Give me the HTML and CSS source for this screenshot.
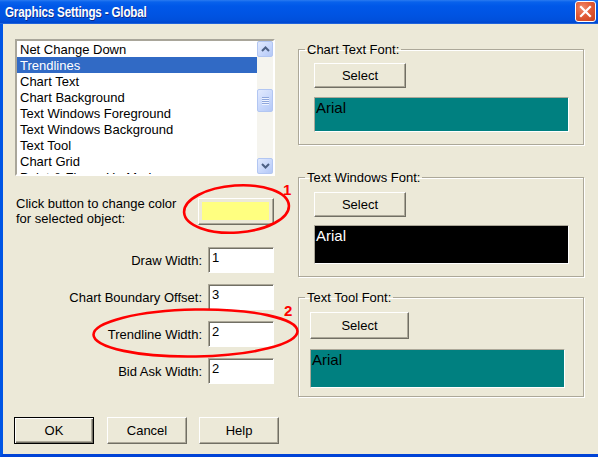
FILE: index.html
```html
<!DOCTYPE html>
<html>
<head>
<meta charset="utf-8">
<link rel="stylesheet" href="styles.css">
</head>
<body>
<div class="window">
  <div class="titlebar">
    <span class="title">Graphics Settings - Global</span>
    <button class="close" aria-label="Close">
      <svg width="13" height="13" viewBox="0 0 13 13"><path d="M2 2 L11 11 M11 2 L2 11" stroke="#fff" stroke-width="2.2" stroke-linecap="square"/></svg>
    </button>
  </div>
  <div class="body">
    <div class="main">
      <div class="left">
        <div class="listbox">
          <ul class="items">
            <li>Net Change Down</li>
            <li class="selected">Trendlines</li>
            <li>Chart Text</li>
            <li>Chart Background</li>
            <li>Text Windows Foreground</li>
            <li>Text Windows Background</li>
            <li>Text Tool</li>
            <li>Chart Grid</li>
            <li>Point &amp; Figure Up Mark</li>
          </ul>
          <div class="scrollbar">
            <div class="sb-btn"><svg width="9" height="6" viewBox="0 0 9 6"><path d="M1 5 L4.5 1.5 L8 5" fill="none" stroke="#4d6185" stroke-width="2"/></svg></div>
            <div class="sb-track">
              <div class="sb-thumb"><span></span><span></span><span></span><span></span></div>
            </div>
            <div class="sb-btn"><svg width="9" height="6" viewBox="0 0 9 6"><path d="M1 1 L4.5 4.5 L8 1" fill="none" stroke="#4d6185" stroke-width="2"/></svg></div>
          </div>
        </div>
        <div class="color-row">
          <div class="color-label">Click button to change color<br>for selected object:</div>
          <button class="btn color-btn"><span class="swatch"></span></button>
        </div>
        <div class="field-row first"><span class="label">Draw Width:</span><div class="input">1</div></div>
        <div class="field-row"><span class="label">Chart Boundary Offset:</span><div class="input">3</div></div>
        <div class="field-row"><span class="label">Trendline Width:</span><div class="input">2</div></div>
        <div class="field-row"><span class="label">Bid Ask Width:</span><div class="input">2</div></div>
      </div>
      <div class="right">
        <fieldset class="group g1">
          <legend>Chart Text Font:</legend>
          <button class="btn select">Select</button>
          <div class="preview teal">Arial</div>
        </fieldset>
        <fieldset class="group g2">
          <legend>Text Windows Font:</legend>
          <button class="btn select">Select</button>
          <div class="preview black">Arial</div>
        </fieldset>
        <fieldset class="group g3">
          <legend>Text Tool Font:</legend>
          <button class="btn select">Select</button>
          <div class="preview teal">Arial</div>
        </fieldset>
      </div>
    </div>
    <div class="actions">
      <button class="btn action default">OK</button>
      <button class="btn action">Cancel</button>
      <button class="btn action help">Help</button>
    </div>
  </div>
  <svg class="annotations" width="598" height="457" viewBox="0 0 598 457">
    <ellipse cx="236.5" cy="209" rx="52.5" ry="23.5" fill="none" stroke="#f00" stroke-width="2.6" transform="rotate(-4 236.5 209)"/>
    <text x="283" y="195" class="anno-num">1</text>
    <ellipse cx="195.5" cy="333" rx="102" ry="23.5" fill="none" stroke="#f00" stroke-width="2.6" transform="rotate(-1 195.5 333)"/>
    <text x="284" y="316" class="anno-num">2</text>
  </svg>
</div>
</body>
</html>
```
FILE: styles.css
```css
* { box-sizing: border-box; }

body {
  margin: 0;
  font-family: "Liberation Sans", Arial, sans-serif;
  font-size: 13px;
  color: #000;
}

.window {
  position: relative;
  width: 598px;
  height: 457px;
  display: flex;
  flex-direction: column;
  overflow: hidden;
  background: #ece9d8;
}

.titlebar {
  height: 24px;
  flex: none;
  display: flex;
  justify-content: space-between;
  align-items: flex-start;
  padding: 0 2px 0 5px;
  background: linear-gradient(#2a7bf0 0, #0862ec 2px, #0058e8 6px, #0054e3 14px, #0050dc 20px, #0047cf 23px, #3d7ee8 24px);
}

.title {
  font-family: "Liberation Sans", Arial, sans-serif;
  font-weight: bold;
  font-size: 14px;
  letter-spacing: -0.2px;
  line-height: 25px;
  color: #fff;
  text-shadow: 1px 1px 0 #0c2a8a;
  transform: scaleX(0.83);
  transform-origin: left center;
}

.close {
  width: 21px;
  height: 21px;
  margin-top: 1px;
  padding: 0;
  border: 1px solid #fff;
  border-radius: 3px;
  background: radial-gradient(circle at 35% 30%, #f08a6c 0, #e25c38 45%, #c8401e 100%);
  display: flex;
  align-items: center;
  justify-content: center;
}

.body {
  flex: 1;
  border-left: 3px solid #0055e5;
  border-bottom: 3px solid #0043d6;
  padding: 15px 0 0 12px;
  display: flex;
  flex-direction: column;
}

.main {
  display: flex;
  align-items: flex-start;
  gap: 23px;
}

.left {
  width: 260px;
  display: flex;
  flex-direction: column;
}

.listbox {
  height: 137px;
  display: flex;
  border: 2px solid;
  border-color: #a9a69a #fff #fff #a9a69a;
  background: #fff;
}

.items {
  list-style: none;
  margin: 0;
  padding: 0;
  flex: 1;
  overflow: hidden;
}

.items li {
  height: 16px;
  line-height: 17px;
  padding-left: 3px;
  white-space: nowrap;
}

.items li.selected {
  background: #316ac5;
  color: #fff;
}

.scrollbar {
  width: 16px;
  display: flex;
  flex-direction: column;
  background: #f5f4ee;
}

.sb-btn, .sb-thumb {
  border: 1px solid #b2c6f2;
  border-radius: 2px;
  background: linear-gradient(135deg, #e2eafe 0, #c6d6fb 60%, #b4c8f6 100%);
}

.sb-btn {
  height: 16px;
  display: flex;
  align-items: center;
  justify-content: center;
}

.sb-track { flex: 1; }

.sb-thumb {
  margin-top: 32px;
  height: 23px;
  display: flex;
  flex-direction: column;
  align-items: center;
  justify-content: center;
  gap: 1px;
}

.sb-thumb span {
  width: 7px;
  height: 1px;
  background: #8ea6dc;
  box-shadow: 0 1px 0 #eef3ff;
}

.btn {
  background: #ece9d8;
  border: 1px solid;
  border-color: #fff #716f64 #716f64 #fff;
  box-shadow: inset -1px -1px 0 #aca899;
  font-family: "Liberation Sans", Arial, sans-serif;
  font-size: 13px;
  color: #000;
  padding: 0;
}

.color-row {
  margin-top: 21px;
  display: flex;
  justify-content: space-between;
  align-items: center;
  padding-left: 1px;
}

.color-label {
  line-height: 15px;
  margin-top: -1px;
}

.color-btn {
  width: 76px;
  height: 27px;
  margin-right: 1px;
  padding: 3px 4px 4px 3px;
  display: flex;
}

.swatch {
  flex: 1;
  background: #ffff80;
}

.field-row {
  display: flex;
  justify-content: flex-end;
  align-items: center;
  gap: 6px;
  height: 26px;
  margin-top: 11px;
  padding-right: 1px;
}

.field-row.first { margin-top: 21px; }

.input {
  width: 66px;
  height: 26px;
  background: #fff;
  border: 1px solid;
  border-color: #aca899 #fff #fff #aca899;
  box-shadow: inset 1px 1px 0 #716f64;
  padding: 2px 2px 0 3px;
  line-height: 15px;
}

.right {
  width: 286px;
  display: flex;
  flex-direction: column;
}

.group {
  margin: 0;
  min-width: 0;
  border: 1px solid #aca899;
  box-shadow: 1px 1px 0 #fff, inset 1px 1px 0 #fff;
  padding: 6px 0 12px 6px;
  display: flex;
  flex-direction: column;
  align-items: flex-start;
}

.group legend {
  padding: 0 2px;
  line-height: 15px;
}

.g1 { margin-top: 3px; }
.g2 { margin-top: 25px; padding-top: 7px; }
.g3 { margin-top: 13px; padding-top: 7px; padding-bottom: 8px; }

.select {
  width: 92px;
  height: 25px;
  margin-left: 9px;
}

.g3 .select {
  width: 99px;
  height: 27px;
  margin-left: 5px;
}

.preview {
  width: 255px;
  margin-left: 9px;
  border: 1px solid;
  border-color: #aca899 #fff #fff #aca899;
  padding: 1px 1px 0 1px;
  font-size: 15px;
  line-height: 17px;
}

.g3 .preview { margin-left: 5px; }

.teal {
  height: 35px;
  margin-top: 9px;
  background: #008080;
  color: #000;
}

.black {
  height: 39px;
  margin-top: 8px;
  background: #000;
  color: #fff;
}

.g3 .teal {
  height: 39px;
  margin-top: 10px;
}

.actions {
  display: flex;
  gap: 13px;
  margin-top: 20px;
  margin-left: -1px;
}

.action {
  width: 80px;
  height: 27px;
}

.action.help { margin-left: -1px; }

.action.default {
  border: 1px solid #000;
  box-shadow: inset 1px 1px 0 #fff, inset -1px -1px 0 #716f64, inset -2px -2px 0 #aca899;
}

.annotations {
  position: absolute;
  left: 0;
  top: 0;
  pointer-events: none;
}

.anno-num {
  font-family: "Liberation Sans", Arial, sans-serif;
  font-weight: bold;
  font-size: 15px;
  fill: #f00;
}
```
